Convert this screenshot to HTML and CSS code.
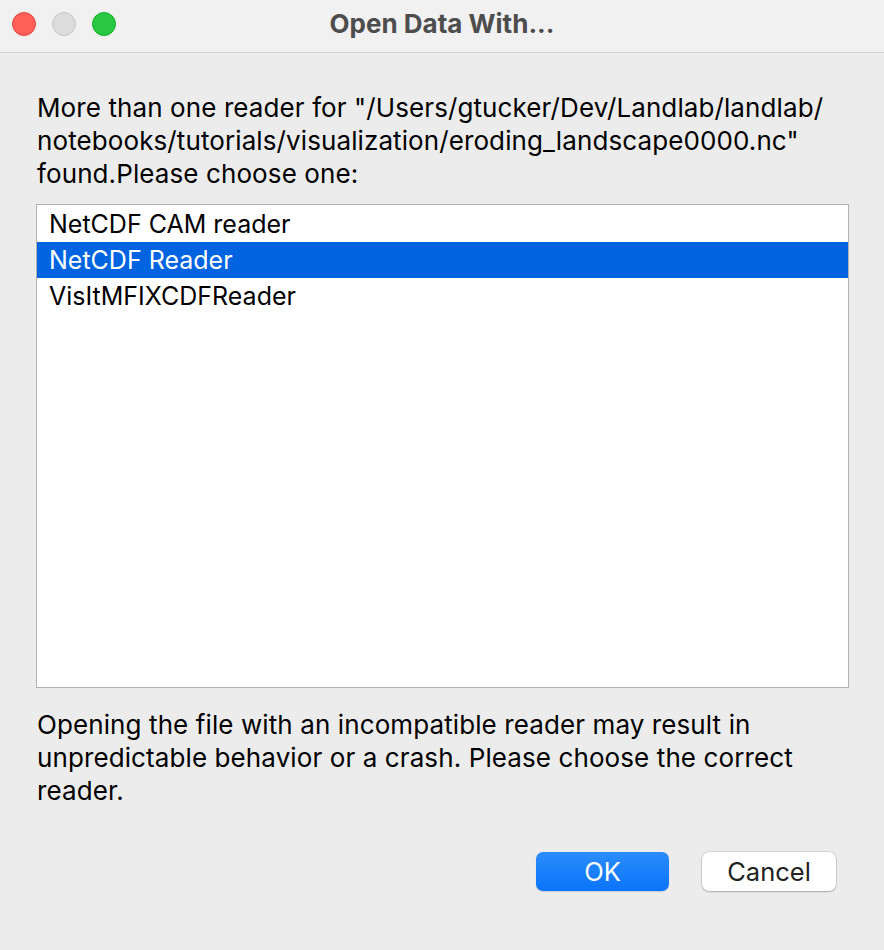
FILE: index.html
```html
<!DOCTYPE html>
<html>
<head>
<meta charset="utf-8">
<link rel="stylesheet" href="styles.css">
</head>
<body>
<div class="window">
  <div class="titlebar">
    <div class="lights">
      <span class="light red"></span>
      <span class="light gray"></span>
      <span class="light green"></span>
    </div>
    <div class="title">Open Data With...</div>
  </div>
  <div class="content">
    <p class="msg">More than one reader for "/Users/gtucker/Dev/Landlab/landlab/<br>notebooks/tutorials/visualization/eroding_landscape0000.nc"<br>found.Please choose one:</p>
    <div class="list">
      <div class="item">NetCDF CAM reader</div>
      <div class="item selected">NetCDF Reader</div>
      <div class="item">VisItMFIXCDFReader</div>
    </div>
    <p class="msg warn">Opening the file with an incompatible reader may result in<br>unpredictable behavior or a crash. Please choose the correct<br>reader.</p>
    <div class="buttons">
      <button class="btn primary">OK</button>
      <button class="btn">Cancel</button>
    </div>
  </div>
</div>
</body>
</html>
```
FILE: styles.css
```css
html, body {
  margin: 0;
  padding: 0;
  background: #ececec;
}
.window {
  width: 884px;
  height: 950px;
  background: #ececec;
  font-family: Inter, "Liberation Sans", sans-serif;
  color: #000;
}
.titlebar {
  height: 52px;
  background: #f2f1f2;
  border-bottom: 1px solid #d2d2d2;
  display: flex;
  align-items: center;
  position: relative;
}
.lights {
  display: flex;
  gap: 16px;
  padding-left: 12px;
  margin-top: -4px;
}
.light {
  width: 24px;
  height: 24px;
  border-radius: 50%;
  box-sizing: border-box;
}
.red { background: #fe5f57; border: 1px solid #e2463f; }
.gray { background: #dcdcdc; border: 1px solid #c8c8c8; }
.green { background: #28c840; border: 1px solid #1aab29; }
.title {
  position: absolute;
  left: 0;
  right: 0;
  top: 8px;
  text-align: center;
  font-size: 26px;
  line-height: 32px;
  font-weight: 700;
  color: #4d4d4d;
  pointer-events: none;
}
.content {
  padding: 38px 35px 0 37px;
}
.msg {
  margin: 0;
  font-size: 26px;
  line-height: 33px;
  letter-spacing: 0.1px;
}
.list {
  margin-top: 14px;
  margin-left: -1px;
  width: 811px;
  height: 481px;
  background: #fff;
  border: 1px solid #b2b2b2;
  padding-top: 1px;
  box-sizing: content-box;
}
.item {
  height: 36px;
  line-height: 36px;
  font-size: 25px;
  padding-left: 12px;
}
.item.selected {
  background: #0064e1;
  color: #fff;
}
.warn {
  margin-top: 20px;
}
.buttons {
  display: flex;
  justify-content: flex-end;
  gap: 33px;
  margin-top: 45px;
  padding-right: 13px;
}
.btn {
  width: 134px;
  height: 39px;
  border-radius: 7px;
  border: none;
  background: #fff;
  box-shadow: 0 0 0 0.5px rgba(0,0,0,0.18), 0 1px 2px rgba(0,0,0,0.2);
  font-family: Inter, "Liberation Sans", sans-serif;
  font-size: 25.5px;
  color: #222;
  padding: 0;
}
.btn.primary {
  width: 133px;
  background: linear-gradient(#2b8cfc, #0a74fa);
  color: #fff;
  box-shadow: 0 1px 1px rgba(0,0,0,0.15);
}
```
